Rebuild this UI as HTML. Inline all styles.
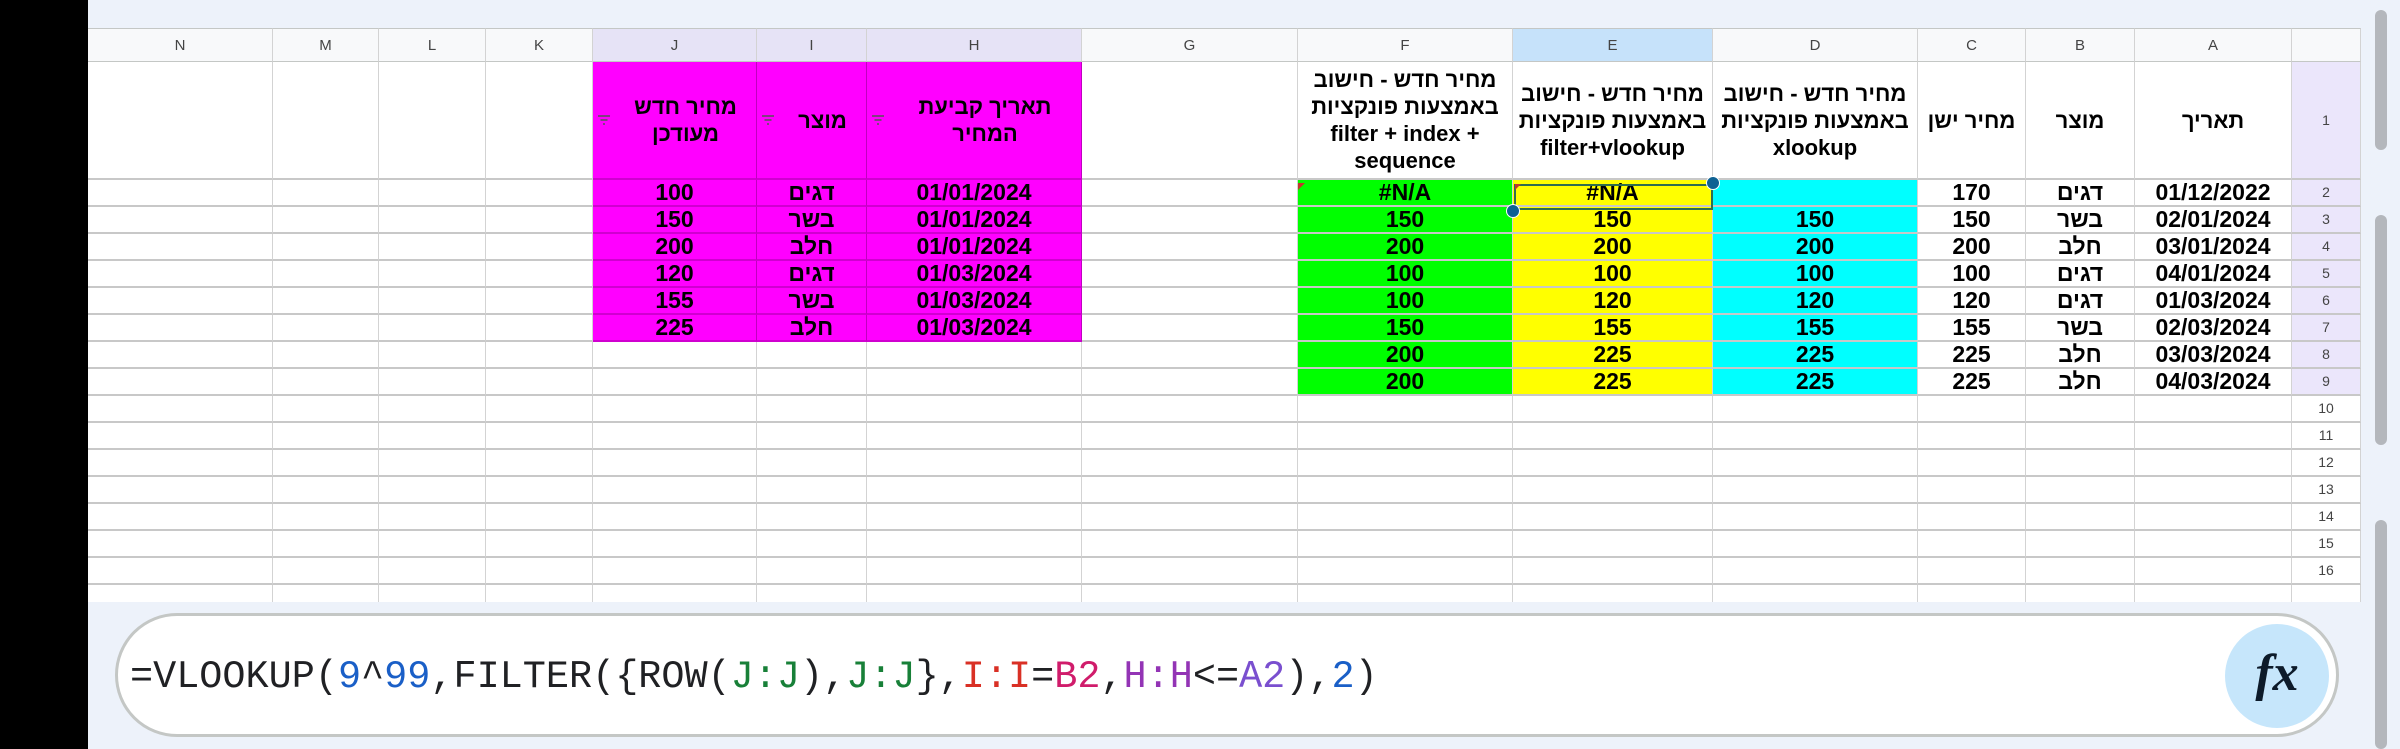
<!DOCTYPE html>
<html><head><meta charset="utf-8">
<style>
*{margin:0;padding:0;box-sizing:border-box}
body{width:2400px;height:749px;overflow:hidden;background:#edf2fa;position:relative;font-family:"Liberation Sans","Noto Sans CJK SC",sans-serif}
#black{position:absolute;left:0;top:0;width:88px;height:749px;background:#000}
#top{position:absolute;left:88px;top:0;width:2312px;height:28px;background:#edf2fa}
table{position:absolute;left:88px;top:28px;border-collapse:separate;border-spacing:0;table-layout:fixed;width:2273px;background:#fff}
td{border-right:1px solid #d3d3d3;border-bottom:2px solid #c8c8c8;padding:0;text-align:center;vertical-align:middle;font-weight:bold;font-size:23px;color:#000;line-height:25px;overflow:hidden;white-space:nowrap}
tr.h td{height:34px;border-bottom:1px solid #c4c7c5;font-weight:normal;font-size:15px;color:#444;background:#f8f9fa;border-top:1px solid #c4c7c5}
tr.r1 td{height:118px;font-size:22px;line-height:27px;white-space:normal;direction:rtl}
tr.d td{height:25.6px}
td.n{font-weight:normal;font-size:14px!important;color:#444;background:#fff;direction:ltr}
td.nl{background:#ebe6fb}
.m{background:#ff00ff;border-right-color:#c000c0;border-bottom-color:#d000d0}
.g{background:#00ff00}
.y{background:#ffff00}
.c{background:#00ffff}
.hs{background:#e6e3f6!important}
.he{background:#c6e2fa!important}
.fh{display:flex;direction:ltr;align-items:center;padding-left:4px}
.fh .t{flex:1;direction:rtl;text-align:center}
.flt{width:14px;height:10px;margin-right:4px;flex:none}
#fb{position:absolute;left:88px;top:602px;width:2312px;height:147px;background:#edf2fa}
#pill{position:absolute;left:115px;top:613px;width:2224px;height:124px;border:3px solid #c4c7c5;border-radius:62px;background:#fff}
#ftext{position:absolute;left:130px;top:652px;font-family:"Liberation Mono",monospace;font-size:38.5px;line-height:50px;color:#202124;white-space:pre}
#fx{position:absolute;left:2225px;top:624px;width:104px;height:104px;border-radius:52px;background:#c6e6fb;text-align:center;font-family:"Liberation Serif",serif;font-style:italic;font-weight:bold;font-size:52px;line-height:100px;color:#0d1b2a}
.sb{position:absolute;left:2375px;width:12px;background:#b4b7bc;border-radius:6px}
</style></head><body>
<div id="black"></div>
<div id="top"></div>
<table>
<colgroup><col style="width:185px"><col style="width:106px"><col style="width:107px"><col style="width:107px"><col style="width:164px"><col style="width:110px"><col style="width:215px"><col style="width:216px"><col style="width:215px"><col style="width:200px"><col style="width:205px"><col style="width:108px"><col style="width:109px"><col style="width:157px"><col style="width:69px"></colgroup>
<tr class="h"><td>N</td><td>M</td><td>L</td><td>K</td><td class="hs">J</td><td class="hs">I</td><td class="hs">H</td><td>G</td><td>F</td><td class="he">E</td><td>D</td><td>C</td><td>B</td><td>A</td><td style="background:#f8f9fa"></td></tr>
<tr class="r1"><td></td><td></td><td></td><td></td>
<td class="m"><div class="fh"><svg class="flt" viewBox="0 0 14 10"><path d="M1 1h12M3.5 5h7M6 9h2" stroke="#555" stroke-width="1.4"/></svg><div class="t">מחיר חדש<br>מעודכן</div></div></td>
<td class="m"><div class="fh"><svg class="flt" viewBox="0 0 14 10"><path d="M1 1h12M3.5 5h7M6 9h2" stroke="#555" stroke-width="1.4"/></svg><div class="t">מוצר</div></div></td>
<td class="m"><div class="fh"><svg class="flt" viewBox="0 0 14 10"><path d="M1 1h12M3.5 5h7M6 9h2" stroke="#555" stroke-width="1.4"/></svg><div class="t">תאריך קביעת<br>המחיר</div></div></td>
<td></td>
<td>מחיר חדש - חישוב באמצעות פונקציות <span dir="ltr">filter + index +</span> sequence</td>
<td>מחיר חדש - חישוב באמצעות פונקציות filter+vlookup</td>
<td>מחיר חדש - חישוב באמצעות פונקציות xlookup</td>
<td>מחיר ישן</td><td>מוצר</td><td>תאריך</td><td class="n nl">1</td></tr>
<tr class="d"><td></td><td></td><td></td><td></td><td class="m">100</td><td class="m">דגים</td><td class="m">01/01/2024</td><td></td><td class="g">#N/A</td><td class="y">#N/A</td><td class="c"></td><td>170</td><td>דגים</td><td>01/12/2022</td><td class="n nl">2</td></tr>
<tr class="d"><td></td><td></td><td></td><td></td><td class="m">150</td><td class="m">בשר</td><td class="m">01/01/2024</td><td></td><td class="g">150</td><td class="y">150</td><td class="c">150</td><td>150</td><td>בשר</td><td>02/01/2024</td><td class="n nl">3</td></tr>
<tr class="d"><td></td><td></td><td></td><td></td><td class="m">200</td><td class="m">חלב</td><td class="m">01/01/2024</td><td></td><td class="g">200</td><td class="y">200</td><td class="c">200</td><td>200</td><td>חלב</td><td>03/01/2024</td><td class="n nl">4</td></tr>
<tr class="d"><td></td><td></td><td></td><td></td><td class="m">120</td><td class="m">דגים</td><td class="m">01/03/2024</td><td></td><td class="g">100</td><td class="y">100</td><td class="c">100</td><td>100</td><td>דגים</td><td>04/01/2024</td><td class="n nl">5</td></tr>
<tr class="d"><td></td><td></td><td></td><td></td><td class="m">155</td><td class="m">בשר</td><td class="m">01/03/2024</td><td></td><td class="g">100</td><td class="y">120</td><td class="c">120</td><td>120</td><td>דגים</td><td>01/03/2024</td><td class="n nl">6</td></tr>
<tr class="d"><td></td><td></td><td></td><td></td><td class="m">225</td><td class="m">חלב</td><td class="m">01/03/2024</td><td></td><td class="g">150</td><td class="y">155</td><td class="c">155</td><td>155</td><td>בשר</td><td>02/03/2024</td><td class="n nl">7</td></tr>
<tr class="d"><td></td><td></td><td></td><td></td><td></td><td></td><td></td><td></td><td class="g">200</td><td class="y">225</td><td class="c">225</td><td>225</td><td>חלב</td><td>03/03/2024</td><td class="n nl">8</td></tr>
<tr class="d"><td></td><td></td><td></td><td></td><td></td><td></td><td></td><td></td><td class="g">200</td><td class="y">225</td><td class="c">225</td><td>225</td><td>חלב</td><td>04/03/2024</td><td class="n nl">9</td></tr>
<tr class="d"><td></td><td></td><td></td><td></td><td></td><td></td><td></td><td></td><td></td><td></td><td></td><td></td><td></td><td></td><td class="n">10</td></tr>
<tr class="d"><td></td><td></td><td></td><td></td><td></td><td></td><td></td><td></td><td></td><td></td><td></td><td></td><td></td><td></td><td class="n">11</td></tr>
<tr class="d"><td></td><td></td><td></td><td></td><td></td><td></td><td></td><td></td><td></td><td></td><td></td><td></td><td></td><td></td><td class="n">12</td></tr>
<tr class="d"><td></td><td></td><td></td><td></td><td></td><td></td><td></td><td></td><td></td><td></td><td></td><td></td><td></td><td></td><td class="n">13</td></tr>
<tr class="d"><td></td><td></td><td></td><td></td><td></td><td></td><td></td><td></td><td></td><td></td><td></td><td></td><td></td><td></td><td class="n">14</td></tr>
<tr class="d"><td></td><td></td><td></td><td></td><td></td><td></td><td></td><td></td><td></td><td></td><td></td><td></td><td></td><td></td><td class="n">15</td></tr>
<tr class="d"><td></td><td></td><td></td><td></td><td></td><td></td><td></td><td></td><td></td><td></td><td></td><td></td><td></td><td></td><td class="n">16</td></tr>
<tr class="d"><td></td><td></td><td></td><td></td><td></td><td></td><td></td><td></td><td></td><td></td><td></td><td></td><td></td><td></td><td class="n"></td></tr>
</table>
<div style="position:absolute;left:1514px;top:184px;width:199px;height:26px;border:2px solid #2f6d50"></div>
<div style="position:absolute;left:1706px;top:176px;width:14px;height:14px;border-radius:7px;background:#0e6193;border:1px solid #fff"></div>
<div style="position:absolute;left:1506px;top:204px;width:14px;height:14px;border-radius:7px;background:#0e6193;border:1px solid #fff"></div>
<div style="position:absolute;left:1298px;top:183px;width:0;height:0;border-top:7px solid #c0392b;border-right:7px solid transparent"></div>
<div style="position:absolute;left:1515px;top:184px;width:0;height:0;border-top:6px solid #c0392b;border-right:6px solid transparent"></div>
<div class="sb" style="top:10px;height:140px"></div>
<div class="sb" style="top:215px;height:230px"></div>
<div id="fb"></div>
<div class="sb" style="top:520px;height:229px"></div>
<div id="pill"></div>
<div id="ftext">=VLOOKUP(<span style="color:#1a5fc7">9</span>^<span style="color:#1a5fc7">99</span>,FILTER({ROW(<span style="color:#188038">J:J</span>),<span style="color:#188038">J:J</span>},<span style="color:#d93025">I:I</span>=<span style="color:#d01c6b">B2</span>,<span style="color:#9334b5">H:H</span>&lt;=<span style="color:#7a4fcf">A2</span>),<span style="color:#1a5fc7">2</span>)</div>
<div id="fx">fx</div>
</body></html>
